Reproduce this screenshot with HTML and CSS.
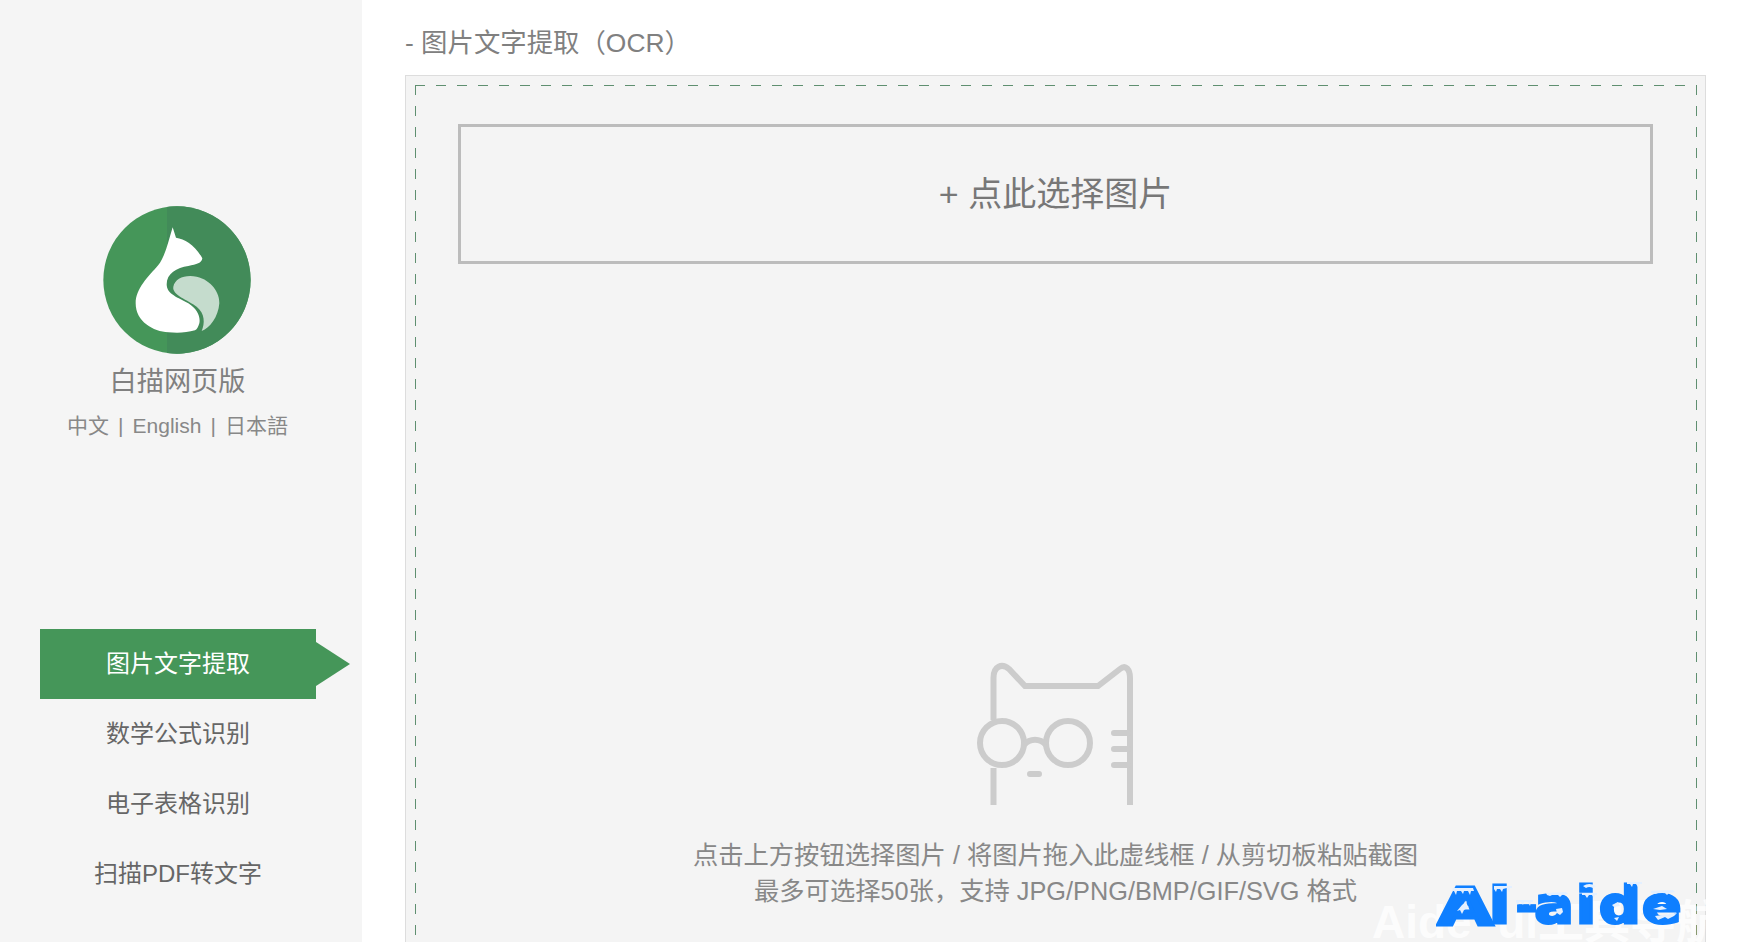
FILE: index.html
```html
<!DOCTYPE html>
<html lang="zh">

<head>
    <meta charset="UTF-8">
    <meta name="viewport" content="width=device-width, initial-scale=1.0">
    <title>白描网页版</title>
    <link rel="stylesheet" href="styles.css">
</head>

<body>
    <div class="sidebar">
        <svg class="logo" viewBox="0 0 540 510" width="180" height="170">
            <circle cx="261" cy="255" r="221" fill="#459659" />
            <path d="M231 36 A221 221 0 1 1 231 474 Z" fill="#428b59" />
            <path d="M248 97 L258 128 C285 132 315 150 337 190 C335 205 320 208 295 213 C260 218 230 235 230 268 C230 298 265 308 295 325 C322 342 332 365 328 385 C325 395 322 403 315 406 C290 414 260 414 235 412 C190 410 137 380 137 325 C137 280 175 245 205 210 C225 185 235 140 248 97 Z" fill="#fff" />
            <path d="M250 275 C255 250 285 238 320 245 C365 255 390 295 388 325 C385 365 360 400 335 408 C345 385 345 355 320 335 C295 315 245 300 250 275 Z" fill="#c5dccd" />
        </svg>
        <div class="app-name">白描网页版</div>
        <div class="lang">中文<span class="sep">|</span>English<span class="sep">|</span>日本語</div>
        <ul class="nav">
            <li class="active">图片文字提取</li>
            <li>数学公式识别</li>
            <li>电子表格识别</li>
            <li>扫描PDF转文字</li>
        </ul>
    </div>

    <div class="main">
        <div class="page-title">- 图片文字提取（OCR）</div>
        <div class="upload-box">
            <div class="dash-frame">
                <div class="pick-btn">+ 点此选择图片</div>
                <svg class="cat" viewBox="-4 0 220 170" width="220" height="170">
                    <g fill="none" stroke="#ccc" stroke-width="6">
                        <path d="M43.5 70 V28 C43.5 16 52 13 59 19 L75 36 H148 L170 19 C176 14 180 20 180 28 V155" />
                        <path d="M43.5 118 V155" />
                        <circle cx="52" cy="93" r="22" />
                        <circle cx="118" cy="93" r="22" />
                        <path d="M74 95 C80 88 90 88 96 95" />
                        <g stroke-linecap="round">
                            <path d="M80 124 H89" />
                            <path d="M164 83 H178" />
                            <path d="M164 99 H178" />
                            <path d="M164 115 H178" />
                        </g>
                    </g>
                </svg>
                <div class="hint">
                    点击上方按钮选择图片 / 将图片拖入此虚线框 / 从剪切板粘贴截图<br>
                    最多可选择50张，支持 JPG/PNG/BMP/GIF/SVG 格式
                </div>
            </div>
        </div>
    </div>

    <div class="ghost-mark">Aide&nbsp;&nbsp;ui工具导航</div>
    <svg class="ai-mark" viewBox="0 0 250 50" width="250" height="50">
        <text class="ai-mark-text" transform="scale(1.38 1)" x="1" y="47">A</text>
        <text class="ai-mark-text" transform="scale(1.12 1)" x="47 70 88 125 145.5 184" y="45">I<tspan class="ai-mark-dash">-</tspan>aide</text>
        <g fill="#e4f0ff">
            <path d="M17 10 h20 l1 3 l-3 0 l-1 4 l-2 -4 l-4 0 l-1 3 l-2 -3 l-4 0 l-1 4 l-2 -4 l-2 0 z" />
            <path d="M58 8 h18 v2 l-2 0 l-1 4 l-2 -4 l-4 1 l-1 3 l-2 -3 l-3 0 l-1 3 l-2 -3 z" />
            <path d="M80 22 h17 v2 l-2 0 l-1 4 l-2 -4 l-4 0 l-1 3 l-2 -3 l-2 0 l-1 3 l-2 -3 z" />
            <path d="M110 15 l20 -1 l2 2 l-6 1 l-2 2 l-2 -2 l-6 0 l-2 1 l-3 -1 z" />
            <path d="M146 15 h15 v2 l-2 0 l-1 3 l-2 -3 l-3 0 l-2 3 l-2 -3 l-3 0 z" />
            <path d="M191 4 h15 v2 l-3 0 l-1 3 l-2 -3 l-3 0 l-1 3 l-2 -3 l-3 0 z" />
            <path d="M215 13 l22 -1 l2 2 l-6 1 l-2 2 l-2 -2 l-7 0 l-3 1 l-4 -1 z" />
            <path d="M147 8 q6 -4 13 0 l-3 2 q-4 -2 -7 0 z" />
            <path d="M26 27 l5 -4 l-1 4 l3 2 l-5 3 l-2 4 l-2 -4 l-3 1 z" />
            <path d="M120 31 l6 -1 l1 4 l-3 3 l-3 -2 z" />
            <path d="M176 27 l6 -3 l2 4 l-6 1 z" />
            <path d="M178 40 l5 -1 l-2 4 z" />
            <path d="M219 38 l22 -3 l-3 3 l-6 3 l-3 -2 l-7 3 z" />
            <path d="M217 31 l9 -3 l5 3 l-7 1 z" />
        </g>
    </svg>
</body>

</html>
```
FILE: styles.css
```css
* {
    margin: 0;
    padding: 0;
    box-sizing: border-box;
}

html,
body {
    height: 942px;
    overflow: hidden;
}

body {
    display: flex;
    background-color: #fff;
    font-family: "Liberation Sans", "Noto Sans CJK SC", sans-serif;
    color: #808080;
}

.sidebar {
    width: 362px;
    flex-shrink: 0;
    background-color: #f5f5f5;
    padding-top: 195px;
    display: flex;
    flex-direction: column;
}

.logo {
    display: block;
    margin-left: 90px;
}

.app-name {
    margin-top: -3px;
    width: 355px;
    text-align: center;
    font-size: 27.2px;
    line-height: 40px;
}

.lang {
    margin-top: 4px;
    width: 355px;
    text-align: center;
    font-size: 21px;
    line-height: 40px;
    color: #888;
}

.lang .sep {
    margin: 0 9px;
}

.nav {
    list-style-type: none;
    margin-top: 183px;
    margin-left: 40px;
    width: 276px;
}

.nav li {
    position: relative;
    height: 70px;
    line-height: 70px;
    text-align: center;
    font-size: 24px;
    color: #666;
}

.nav li.active {
    background-color: #459659;
    color: #fff;
}

.nav li.active::after {
    content: "";
    position: absolute;
    left: 100%;
    top: 13px;
    border-left: 34px solid #459659;
    border-top: 22px solid transparent;
    border-bottom: 22px solid transparent;
}

.main {
    flex: 1;
    padding: 0 33px 0 43px;
}

.page-title {
    height: 75px;
    padding-top: 25px;
    font-size: 26.4px;
    line-height: 36px;
}

.upload-box {
    height: 900px;
    border: 1px solid #ddd;
    padding: 9px 8px 0 9px;
    background-color: #f4f4f4;
}

.dash-frame {
    height: 100%;
    padding: 39px 44px 0 43px;
    text-align: center;
    background-image:
        repeating-linear-gradient(to right, #5f8f70 0 10px, transparent 10px 21px),
        repeating-linear-gradient(to bottom, #5f8f70 0 10px, transparent 10px 21px),
        repeating-linear-gradient(to bottom, #5f8f70 0 10px, transparent 10px 21px);
    background-size: 100% 1px, 1px 100%, 1px 100%;
    background-position: 0 0, 0 0, 100% 0;
    background-repeat: no-repeat;
}

.pick-btn {
    height: 140px;
    line-height: 134px;
    border: 3px solid #bcbcbc;
    font-size: 34px;
    color: #777;
}

.cat {
    display: block;
    margin: 386px auto 0;
}

.hint {
    margin-top: 17px;
    font-size: 25.3px;
    line-height: 36px;
    color: #888;
}

.ghost-mark {
    position: absolute;
    left: 1372px;
    top: 898px;
    font-size: 46px;
    font-weight: bold;
    line-height: 48px;
    white-space: nowrap;
    color: rgba(255, 255, 255, 0.8);
}

.ai-mark {
    position: absolute;
    left: 1436px;
    top: 878px;
}

.ai-mark-text {
    font-family: "DejaVu Sans", sans-serif;
    font-weight: bold;
    font-size: 52px;
    fill: #0f7fff;
    stroke: #0f7fff;
    stroke-width: 3px;
}

.ai-mark-dash {
    stroke-width: 1px;
}
```
